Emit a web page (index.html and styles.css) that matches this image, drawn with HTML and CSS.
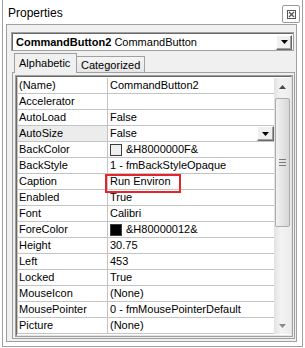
FILE: index.html
```html
<!DOCTYPE html>
<html lang="en">
<head>
    <meta charset="UTF-8">
    <title>Properties</title>
    <link rel="stylesheet" href="styles.css">
</head>
<body>
    <div class="window">
        <div class="titlebar">
            <span class="title">Properties</span>
            <span class="close-btn">
                <svg width="9" height="9" viewBox="0 0 9 9">
                    <rect x="0.5" y="0.5" width="8" height="8" fill="none" stroke="#555" />
                    <path d="M2 2 L7 7 M7 2 L2 7" stroke="#555" stroke-width="1.4" />
                </svg>
            </span>
        </div>

        <div class="panel">
            <div class="combo">
                <span class="combo-text"><b>CommandButton2</b> CommandButton</span>
                <span class="drop-btn">
                    <svg width="7" height="4" viewBox="0 0 7 4"><polygon points="0,0 7,0 3.5,4" fill="#000" /></svg>
                </span>
            </div>

            <div class="tabs">
                <div class="tab active">Alphabetic</div>
                <div class="tab">Categorized</div>
            </div>

            <div class="tab-page">
                <div class="grid">
                    <div class="grid-inner">
                        <div class="rows">
                            <div class="row"><div class="name">(Name)</div><div class="value">CommandButton2</div></div>
                            <div class="row"><div class="name">Accelerator</div><div class="value"></div></div>
                            <div class="row"><div class="name">AutoLoad</div><div class="value">False</div></div>
                            <div class="row">
                                <div class="name selected">AutoSize</div>
                                <div class="value">
                                    <span class="value-text">False</span>
                                    <span class="drop-btn cell-btn">
                                        <svg width="7" height="4" viewBox="0 0 7 4"><polygon points="0,0 7,0 3.5,4" fill="#000" /></svg>
                                    </span>
                                </div>
                            </div>
                            <div class="row"><div class="name">BackColor</div><div class="value"><span class="swatch light"></span>&amp;H8000000F&amp;</div></div>
                            <div class="row"><div class="name">BackStyle</div><div class="value">1 - fmBackStyleOpaque</div></div>
                            <div class="row">
                                <div class="name">Caption</div>
                                <div class="value">Run Environ<span class="highlight"></span></div>
                            </div>
                            <div class="row"><div class="name">Enabled</div><div class="value">True</div></div>
                            <div class="row"><div class="name">Font</div><div class="value">Calibri</div></div>
                            <div class="row"><div class="name">ForeColor</div><div class="value"><span class="swatch dark"></span>&amp;H80000012&amp;</div></div>
                            <div class="row"><div class="name">Height</div><div class="value">30.75</div></div>
                            <div class="row"><div class="name">Left</div><div class="value">453</div></div>
                            <div class="row"><div class="name">Locked</div><div class="value">True</div></div>
                            <div class="row"><div class="name">MouseIcon</div><div class="value">(None)</div></div>
                            <div class="row"><div class="name">MousePointer</div><div class="value">0 - fmMousePointerDefault</div></div>
                            <div class="row"><div class="name">Picture</div><div class="value">(None)</div></div>
                        </div>

                        <div class="scrollbar">
                            <div class="sb-btn">
                                <svg width="7" height="4" viewBox="0 0 7 4"><polygon points="0,4 7,4 3.5,0" fill="#4a4a4a" /></svg>
                            </div>
                            <div class="sb-track">
                                <div class="sb-thumb">
                                    <svg width="7" height="7" viewBox="0 0 7 7">
                                        <path d="M0 0.5 H7 M0 3.5 H7 M0 6.5 H7" stroke="#7a7a7a" />
                                    </svg>
                                </div>
                            </div>
                            <div class="sb-btn">
                                <svg width="7" height="4" viewBox="0 0 7 4"><polygon points="0,0 7,0 3.5,4" fill="#8a8a8a" /></svg>
                            </div>
                        </div>
                    </div>
                </div>
            </div>
        </div>
    </div>
</body>
</html>
```

FILE: styles.css
```css
* {
    box-sizing: border-box;
}
body {
    margin: 0;
    background: #fff;
    font-family: "Liberation Sans", Arial, sans-serif;
    font-size: 11px;
    color: #000;
}
.window {
    margin-left: 2px;
    width: 301px;
    height: 347px;
    border: 1px solid #a0a0a0;
    border-top: none;
}
.titlebar {
    display: flex;
    justify-content: space-between;
    align-items: flex-start;
    height: 24px;
    padding: 0 2px 0 5px;
}
.title {
    font-size: 12px;
    line-height: 26px;
}
.close-btn {
    margin-top: 5px;
    width: 18px;
    height: 18px;
    border: 1px solid #9a9a9a;
    border-radius: 2px;
    display: flex;
    align-items: center;
    justify-content: center;
}
.panel {
    margin-left: 3px;
    width: 291px;
    height: 318px;
    border: 1px solid #a0a0a0;
    background: #f0f0f0;
    padding: 7px 0 0 4px;
}
.combo {
    width: 283px;
    height: 19px;
    display: flex;
    align-items: center;
    background: #fff;
    border: 1px solid #a0a0a0;
    box-shadow: inset 1px 1px 0 #696969;
    padding: 1px 1px 0 4px;
}
.combo-text {
    flex: 1;
    line-height: 15px;
}
.drop-btn {
    width: 16px;
    height: 15px;
    background: #f0f0f0;
    border: 1px solid;
    border-color: #fff #696969 #696969 #fff;
    box-shadow: inset -1px -1px 0 #a0a0a0;
    display: flex;
    align-items: center;
    justify-content: center;
}
.tabs {
    display: flex;
    align-items: flex-end;
    height: 19px;
    margin: 2px 0 0 3px;
}
.tab {
    height: 16px;
    width: 69px;
    margin-left: -1px;
    padding-left: 4px;
    border: 1px solid #a0a0a0;
    border-bottom: none;
    background: linear-gradient(#f4f4f4, #e6e6e6);
    line-height: 16px;
}
.tab.active {
    position: relative;
    z-index: 1;
    width: 63px;
    height: 20px;
    margin-left: 0;
    margin-bottom: -1px;
    background: #f0f0f0;
    line-height: 19px;
}
.tab-page {
    margin-left: 1px;
    width: 283px;
    height: 267px;
    border: 1px solid #a0a0a0;
    padding: 2px;
}
.grid {
    width: 278px;
    height: 262px;
    border: 1px solid #a0a0a0;
}
.grid-inner {
    display: flex;
    height: 100%;
    border: 1px solid;
    border-color: #696969 #e3e3e3 #e3e3e3 #696969;
    background: #fff;
    padding-top: 1px;
}
.rows {
    width: 257px;
}
.row {
    display: flex;
    height: 16px;
    border-bottom: 1px solid #c4c4c4;
}
.name {
    width: 91px;
    padding-left: 1px;
    border-left: 1px solid #c4c4c4;
    border-right: 1px solid #c4c4c4;
    line-height: 15px;
    white-space: nowrap;
}
.name.selected {
    background: #ececec;
}
.value {
    flex: 1;
    display: flex;
    align-items: center;
    padding-left: 2px;
    line-height: 15px;
    white-space: nowrap;
    position: relative;
}
.value-text {
    flex: 1;
}
.cell-btn {
    width: 17px;
    height: 15px;
}
.swatch {
    width: 12px;
    height: 12px;
    margin-right: 4px;
    border: 1px solid #3c3c3c;
}
.swatch.light {
    background: #f0f0f0;
}
.swatch.dark {
    background: #000;
}
.highlight {
    position: absolute;
    left: -3px;
    top: 0;
    width: 76px;
    height: 19px;
    border: 2px solid #e3262b;
}
.scrollbar {
    width: 17px;
    height: 256px;
    display: flex;
    flex-direction: column;
    background: linear-gradient(to right, #e2e2e2, #f3f3f3 40%, #ececec);
}
.sb-btn {
    height: 17px;
    display: flex;
    align-items: center;
    justify-content: center;
}
.sb-track {
    flex: 1;
    padding: 3px 1px 0 1px;
}
.sb-thumb {
    height: 129px;
    border: 1px solid #acacac;
    border-radius: 2px;
    background: linear-gradient(to right, #f2f2f2, #d6d6d6);
    display: flex;
    align-items: center;
    justify-content: center;
}
```
